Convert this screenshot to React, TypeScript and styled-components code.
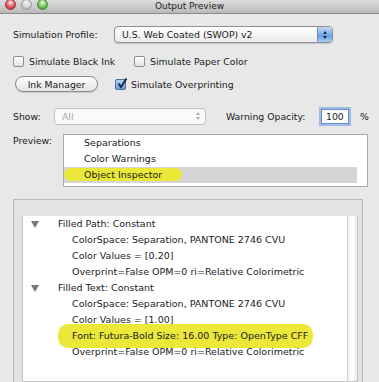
import React from "react";
import styled, { createGlobalStyle } from "styled-components";

const GlobalStyle = createGlobalStyle`
  html, body {
    margin: 0;
    padding: 0;
  }
  body {
    background: #e8e8e8;
    font-family: "DejaVu Sans", "Liberation Sans", sans-serif;
    font-size: 9.3px;
    color: #1a1a1a;
  }
`;

const Window = styled.div`
  width: 379px;
  height: 382px;
  overflow: hidden;
  background: #e8e8e8;
`;

const TitleBar = styled.div`
  height: 13px;
  display: grid;
  grid-template-columns: 60px 1fr 60px;
  align-items: start;
  background: linear-gradient(#dedede, #b9b9b9);
  border-bottom: 1px solid #8c8c8c;
`;

const Lights = styled.div`
  display: flex;
  gap: 5px;
  padding-left: 5px;
  margin-top: -1px;
`;

const Light = styled.span<{ $color: string; $dark: string }>`
  width: 11px;
  height: 11px;
  border-radius: 50%;
  box-sizing: border-box;
  border: 1px solid ${(p) => p.$dark};
  background: radial-gradient(circle at 50% 30%, #ffffffaa 0, ${(p) => p.$color} 55%, ${(p) => p.$dark} 100%);
`;

const Title = styled.div`
  font-size: 9px;
  line-height: 13px;
  color: #222;
  text-align: center;
`;

const Content = styled.div`
  padding: 12px 0 0 13px;
`;

const Row = styled.div<{ $top: number; $height: number }>`
  display: flex;
  align-items: center;
  margin-top: ${(p) => p.$top}px;
  height: ${(p) => p.$height}px;
`;

const Label = styled.span<{ $width?: number; $gap?: number }>`
  width: ${(p) => (p.$width ? `${p.$width}px` : "auto")};
  margin-left: ${(p) => p.$gap ?? 0}px;
  flex-shrink: 0;
  white-space: nowrap;
`;

const Popup = styled.div<{ $width: number; $disabled?: boolean }>`
  width: ${(p) => p.$width}px;
  height: 17px;
  box-sizing: border-box;
  border: 1px solid ${(p) => (p.$disabled ? "#c2c2c2" : "#8f8f8f")};
  border-radius: 4px;
  background: ${(p) => (p.$disabled ? "#fafafa" : "linear-gradient(#ffffff, #ececec)")};
  display: flex;
  align-items: center;
  overflow: hidden;
  color: ${(p) => (p.$disabled ? "#a8a8a8" : "#1a1a1a")};
  box-shadow: ${(p) => (p.$disabled ? "none" : "0 1px 1px rgba(0,0,0,0.15)")};
`;

const PopupText = styled.span`
  flex: 1;
  padding-left: 7px;
  white-space: nowrap;
`;

const Stepper = styled.span<{ $blue?: boolean }>`
  width: 14px;
  height: 100%;
  display: flex;
  flex-direction: column;
  align-items: center;
  justify-content: center;
  gap: 2px;
  background: ${(p) => (p.$blue ? "linear-gradient(#c4daf6, #7fb0ea 50%, #5f97e0 51%, #a9cdf7)" : "transparent")};
  border-left: ${(p) => (p.$blue ? "1px solid #6b8fbf" : "none")};
`;

const Arrow = styled.span<{ $up?: boolean; $color: string }>`
  width: 0;
  height: 0;
  border-left: 2.5px solid transparent;
  border-right: 2.5px solid transparent;
  ${(p) =>
    p.$up
      ? `border-bottom: 3px solid ${p.$color};`
      : `border-top: 3px solid ${p.$color};`}
`;

const Check = styled.span<{ $checked?: boolean }>`
  width: 11px;
  height: 11px;
  box-sizing: border-box;
  border: 1px solid ${(p) => (p.$checked ? "#4d6f9f" : "#8e8e8e")};
  border-radius: 2px;
  background: ${(p) => (p.$checked ? "linear-gradient(#b6d1f3, #6f9fdc)" : "linear-gradient(#ffffff, #e3e3e3)")};
  flex-shrink: 0;
  position: relative;
  svg {
    position: absolute;
    left: 0px;
    top: -3px;
  }
`;

const CheckItem = styled.label<{ $width?: number }>`
  display: flex;
  align-items: center;
  gap: 5px;
  width: ${(p) => (p.$width ? `${p.$width}px` : "auto")};
  white-space: nowrap;
`;

const PillButton = styled.button`
  width: 83px;
  height: 16px;
  box-sizing: border-box;
  border: 1px solid #8a8a8a;
  border-radius: 9px;
  background: linear-gradient(#ffffff, #e4e4e4);
  font: inherit;
  color: #1a1a1a;
  padding: 0;
  margin: 0 17px 0 2px;
  box-shadow: 0 1px 1px rgba(0, 0, 0, 0.12);
`;

const Field = styled.div`
  width: 28px;
  height: 15px;
  box-sizing: border-box;
  border: 1px solid #6a8fc4;
  box-shadow: 0 0 0 2px #9dbde8;
  background: #fff;
  display: flex;
  align-items: center;
  padding-left: 4px;
  margin-left: 15px;
`;

const Percent = styled.span`
  margin-left: 11px;
`;

const PreviewRow = styled.div`
  display: flex;
  align-items: flex-start;
  margin-top: 10px;
`;

const PreviewLabel = styled.span`
  width: 50px;
  padding-top: 1px;
`;

const ListBox = styled.div`
  width: 305px;
  height: 53px;
  box-sizing: border-box;
  border: 1px solid #a9a9a9;
  background: #fff;
  padding-right: 10px;
  font-size: 9.5px;
`;

const ListItem = styled.div<{ $selected?: boolean }>`
  height: 16px;
  line-height: 16px;
  padding-left: 20px;
  background: ${(p) => (p.$selected ? "#d5d5d5" : "transparent")};
  white-space: nowrap;
`;

const Marker = styled.span<{ $l: number; $r: number; $v: number }>`
  background: #ece83a;
  border-radius: 10px;
  padding: ${(p) => p.$v}px ${(p) => p.$r}px ${(p) => p.$v}px ${(p) => p.$l}px;
  margin: 0 -${(p) => p.$r}px 0 -${(p) => p.$l}px;
`;

const Panel = styled.div`
  margin-top: 12px;
  width: 350px;
  height: 200px;
  box-sizing: border-box;
  border: 1px solid #b9b9b9;
  border-bottom: none;
  background: #e3e3e3;
  padding: 16px 4px 0 8px;
`;

const Outline = styled.div`
  display: flex;
  height: 165px;
  background: #fff;
  border: 1px solid #c4c4c4;
  border-top: none;
`;

const TreeBody = styled.div`
  flex: 1;
  font-size: 9.5px;
`;

const ScrollTrack = styled.div`
  width: 9px;
  border-left: 1px solid #d2d2d2;
  background: linear-gradient(90deg, #f1f1f1, #ffffff 50%, #ececec);
`;

const TreeRow = styled.div<{ $indent: number }>`
  display: flex;
  align-items: center;
  height: 16px;
  line-height: 16px;
  padding-left: ${(p) => p.$indent}px;
  white-space: nowrap;
`;

const Disclosure = styled.svg`
  width: 8px;
  height: 7px;
  margin-right: 19px;
  flex-shrink: 0;
`;

const Triangle = () => (
  <Disclosure viewBox="0 0 8 7">
    <polygon points="0,0 8,0 4,7" fill="#7a7a7a" />
  </Disclosure>
);

const Tick = () => (
  <svg width="12" height="12" viewBox="0 0 12 12">
    <path d="M2.5 6.5 L5 10 L10.5 1.5" fill="none" stroke="#1b2a45" strokeWidth="2" />
  </svg>
);

export default function App() {
  return (
    <>
      <GlobalStyle />
      <Window>
        <TitleBar>
          <Lights>
            <Light $color="#e5545c" $dark="#a3262e" />
            <Light $color="#d4d4d4" $dark="#9a9a9a" />
            <Light $color="#70c44f" $dark="#3d8a25" />
          </Lights>
          <Title>Output Preview</Title>
          <span />
        </TitleBar>
        <Content>
          <Row $top={0} $height={17}>
            <Label $width={101}>Simulation Profile:</Label>
            <Popup $width={219}>
              <PopupText>U.S. Web Coated (SWOP) v2</PopupText>
              <Stepper $blue>
                <Arrow $up $color="#1e2f4d" />
                <Arrow $color="#1e2f4d" />
              </Stepper>
            </Popup>
          </Row>
          <Row $top={10} $height={16}>
            <CheckItem $width={121}>
              <Check />
              Simulate Black Ink
            </CheckItem>
            <CheckItem>
              <Check />
              Simulate Paper Color
            </CheckItem>
          </Row>
          <Row $top={7} $height={16}>
            <PillButton>Ink Manager</PillButton>
            <CheckItem>
              <Check $checked>
                <Tick />
              </Check>
              Simulate Overprinting
            </CheckItem>
          </Row>
          <Row $top={16} $height={16}>
            <Label $width={41}>Show:</Label>
            <Popup $width={152} $disabled>
              <PopupText>All</PopupText>
              <Stepper>
                <Arrow $up $color="#b0b0b0" />
                <Arrow $color="#b0b0b0" />
              </Stepper>
            </Popup>
            <Label $width={80} $gap={20}>Warning Opacity:</Label>
            <Field>100</Field>
            <Percent>%</Percent>
          </Row>
          <PreviewRow>
            <PreviewLabel>Preview:</PreviewLabel>
            <ListBox>
              <ListItem>Separations</ListItem>
              <ListItem>Color Warnings</ListItem>
              <ListItem $selected>
                <Marker $l={20} $r={20} $v={1}>
                  Object Inspector
                </Marker>
              </ListItem>
            </ListBox>
          </PreviewRow>
          <Panel>
            <Outline>
              <TreeBody>
                <TreeRow $indent={8}>
                  <Triangle />
                  Filled Path: Constant
                </TreeRow>
                <TreeRow $indent={49}>ColorSpace: Separation, PANTONE 2746 CVU</TreeRow>
                <TreeRow $indent={49}>Color Values = [0.20]</TreeRow>
                <TreeRow $indent={49}>Overprint=False OPM=0 ri=Relative Colorimetric</TreeRow>
                <TreeRow $indent={8}>
                  <Triangle />
                  Filled Text: Constant
                </TreeRow>
                <TreeRow $indent={49}>ColorSpace: Separation, PANTONE 2746 CVU</TreeRow>
                <TreeRow $indent={49}>Color Values = [1.00]</TreeRow>
                <TreeRow $indent={49}>
                  <Marker $l={14} $r={5} $v={4}>
                    Font: Futura-Bold Size: 16.00 Type: OpenType CFF
                  </Marker>
                </TreeRow>
                <TreeRow $indent={49}>Overprint=False OPM=0 ri=Relative Colorimetric</TreeRow>
              </TreeBody>
              <ScrollTrack />
            </Outline>
          </Panel>
        </Content>
      </Window>
    </>
  );
}
